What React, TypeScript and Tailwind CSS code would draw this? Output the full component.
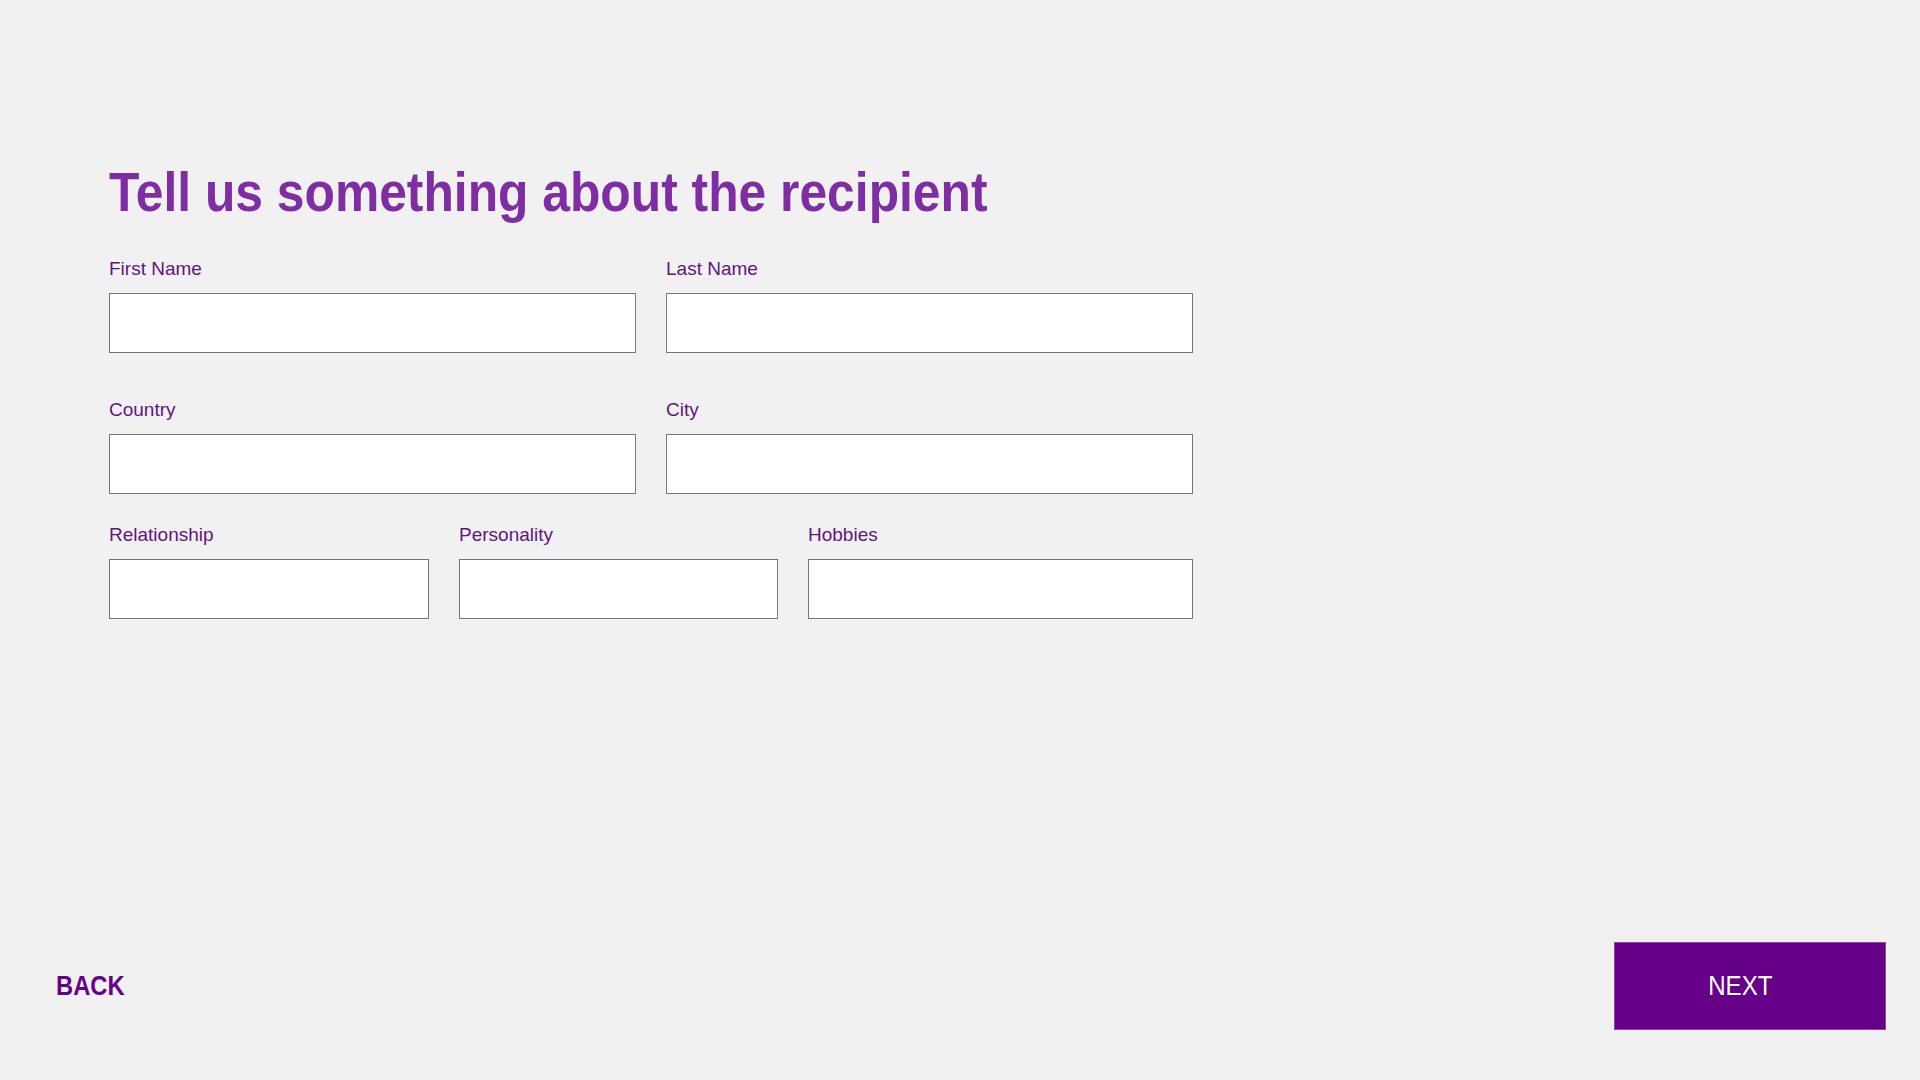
import { useState } from 'react';

type Field = {
  id: string;
  label: string;
  width: string;
};

const rowOne: Field[] = [
  { id: 'firstName', label: 'First Name', width: 'flex-1' },
  { id: 'lastName', label: 'Last Name', width: 'flex-1' },
];

const rowTwo: Field[] = [
  { id: 'country', label: 'Country', width: 'flex-1' },
  { id: 'city', label: 'City', width: 'flex-1' },
];

const rowThree: Field[] = [
  { id: 'relationship', label: 'Relationship', width: 'w-[320px]' },
  { id: 'personality', label: 'Personality', width: 'w-[319px]' },
  { id: 'hobbies', label: 'Hobbies', width: 'flex-1' },
];

function FormField({
  field,
  value,
  onChange,
}: {
  field: Field;
  value: string;
  onChange: (id: string, v: string) => void;
}) {
  return (
    <div className={`flex flex-col ${field.width}`}>
      <label
        htmlFor={field.id}
        className="text-[19px] leading-[22px] text-[#62157f]"
      >
        {field.label}
      </label>
      <input
        id={field.id}
        type="text"
        value={value}
        onChange={(e) => onChange(field.id, e.target.value)}
        className="mt-[13px] h-[60px] w-full border border-[#767676] bg-white px-3 text-[18px] text-gray-800 outline-none"
      />
    </div>
  );
}

export default function App() {
  const [values, setValues] = useState<Record<string, string>>({});

  const update = (id: string, v: string) => {
    setValues((prev) => ({ ...prev, [id]: v }));
  };

  return (
    <div className="min-h-screen w-full bg-[#f1f1f1] flex flex-col font-['Liberation_Sans',Arial,sans-serif]">
      <main className="pl-[109px] pt-[165px] w-[1193px]">
        {/* condensed headline face isn't available, so squeeze the bold sans */}
        <h1 className="origin-left scale-x-[0.905] whitespace-nowrap text-[55px] leading-[55px] font-bold text-[#7f2da3]">
          Tell us something about the recipient
        </h1>

        <div className="mt-[38px] flex gap-[30px]">
          {rowOne.map((f) => (
            <FormField key={f.id} field={f} value={values[f.id] ?? ''} onChange={update} />
          ))}
        </div>

        <div className="mt-[46px] flex gap-[30px]">
          {rowTwo.map((f) => (
            <FormField key={f.id} field={f} value={values[f.id] ?? ''} onChange={update} />
          ))}
        </div>

        <div className="mt-[30px] flex gap-[30px]">
          {rowThree.map((f) => (
            <FormField key={f.id} field={f} value={values[f.id] ?? ''} onChange={update} />
          ))}
        </div>
      </main>

      <footer className="mt-auto flex items-center justify-between pl-[56px] pr-[34px] pb-[50px]">
        <button className="text-[27px] font-bold text-[#67008b]">
          <span className="inline-block origin-left scale-x-[0.88]">BACK</span>
        </button>
        <button className="flex h-[88px] w-[272px] items-center justify-center border border-[#8a4aa5] bg-[#660088] pr-5 text-[28px] text-white">
          <span className="inline-block scale-x-[0.86]">NEXT</span>
        </button>
      </footer>
    </div>
  );
}
